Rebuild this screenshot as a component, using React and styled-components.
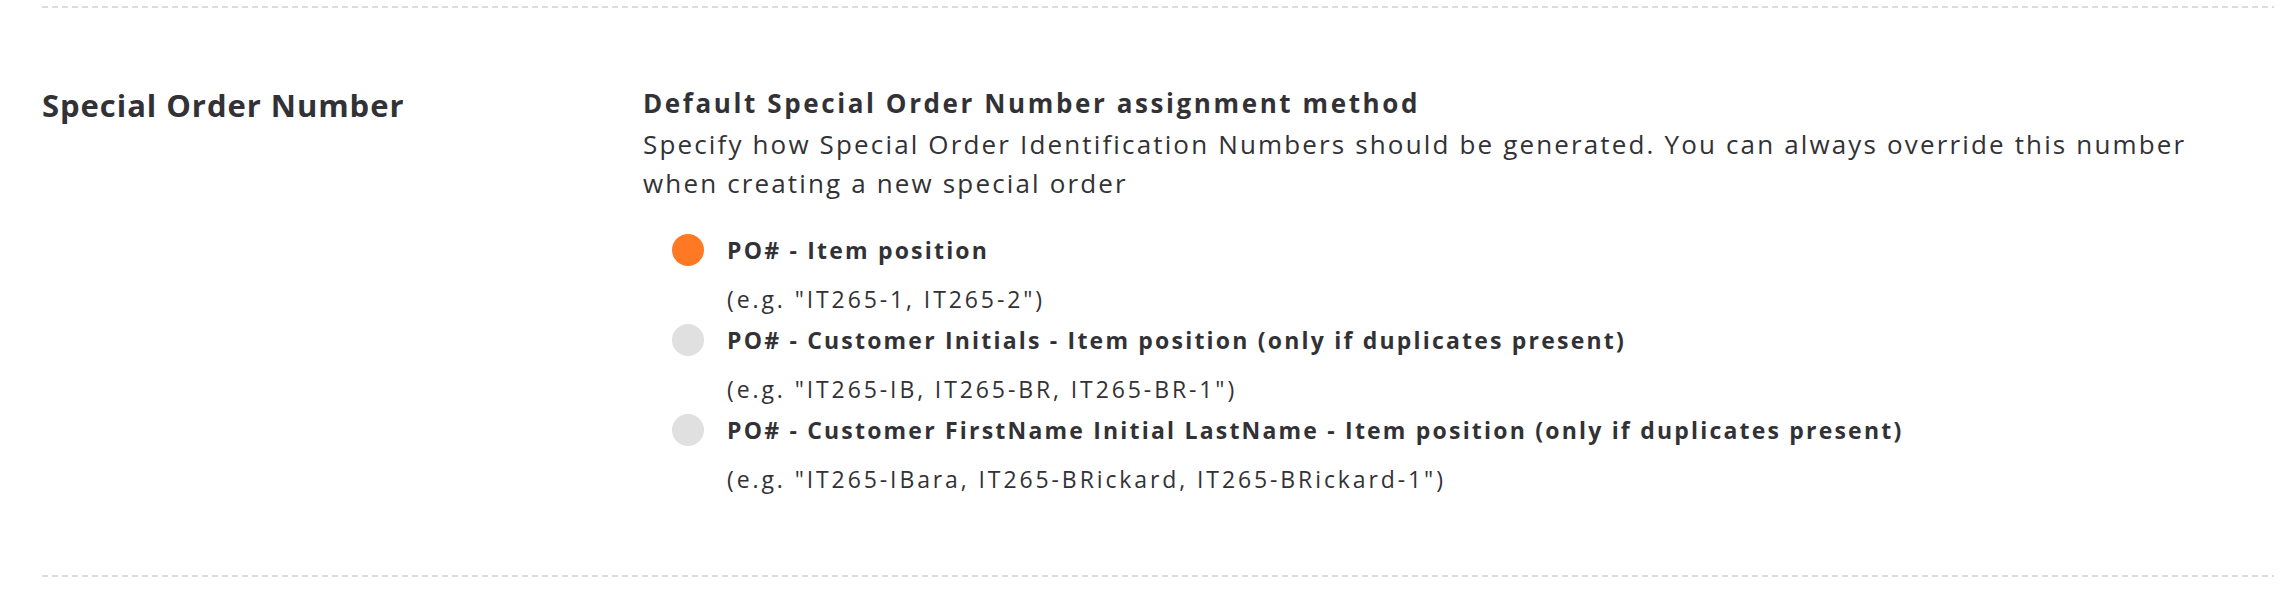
import styled, { createGlobalStyle } from "styled-components";

const OPTIONS = [
  {
    id: "item",
    label: "PO# - Item position",
    example: '(e.g. "IT265-1, IT265-2")',
  },
  {
    id: "initials",
    label: "PO# - Customer Initials - Item position (only if duplicates present)",
    example: '(e.g. "IT265-IB, IT265-BR, IT265-BR-1")',
  },
  {
    id: "name",
    label:
      "PO# - Customer FirstName Initial LastName - Item position (only if duplicates present)",
    example: '(e.g. "IT265-IBara, IT265-BRickard, IT265-BRickard-1")',
  },
];

function App() {
  const selected = "item";

  return (
    <>
      <GlobalStyle />
      <Page>
        <Divider />
        <Section>
          <SectionTitle>Special Order Number</SectionTitle>
          <Content>
            <Heading>Default Special Order Number assignment method</Heading>
            <Description>
              Specify how Special Order Identification Numbers should be
              generated. You can always override this number when creating a
              new special order
            </Description>
            <OptionList>
              {OPTIONS.map(({ id, label, example }) => (
                <Option key={id}>
                  <Radio $checked={id === selected} />
                  <OptionLabel>{label}</OptionLabel>
                  <OptionExample>{example}</OptionExample>
                </Option>
              ))}
            </OptionList>
          </Content>
        </Section>
        <Divider />
      </Page>
    </>
  );
}

export default App;

const GlobalStyle = createGlobalStyle`
  body {
    margin: 0;
    background: #ffffff;
    font-family: "Open Sans", "Lato", sans-serif;
    color: #323236;
  }
`;

const Page = styled.div`
  padding: 6px 4px 0 42px;
`;

const Divider = styled.div`
  height: 2px;
  background: repeating-linear-gradient(
    to right,
    #dcdcdc 0 6px,
    transparent 6px 10px
  );
`;

const Section = styled.div`
  display: grid;
  grid-template-columns: 601px 1fr;
  padding: 79px 0 76px;
`;

const SectionTitle = styled.h2`
  margin: 0;
  font-size: 31px;
  line-height: 36px;
  font-weight: 700;
  letter-spacing: 0.95px;
`;

const Content = styled.div`
  display: flex;
  flex-direction: column;
`;

const Heading = styled.h3`
  margin: 0;
  font-size: 26px;
  line-height: 32px;
  font-weight: 700;
  letter-spacing: 2.6px;
`;

const Description = styled.p`
  margin: 6px 0 0;
  max-width: 1580px;
  font-size: 26px;
  line-height: 39px;
  font-weight: 400;
  letter-spacing: 2.15px;
`;

const OptionList = styled.div`
  display: flex;
  flex-direction: column;
  gap: 1px;
  margin-top: 27px;
  padding-left: 29px;
`;

const Option = styled.div`
  display: grid;
  grid-template-columns: 32px 1fr;
  column-gap: 23px;
  row-gap: 9px;
  align-items: center;
`;

const Radio = styled.span`
  width: 32px;
  height: 32px;
  border-radius: 50%;
  background: ${(props) => (props.$checked ? "#ff7824" : "#e0e0e0")};
`;

const OptionLabel = styled.div`
  font-size: 23px;
  line-height: 40px;
  font-weight: 700;
  letter-spacing: 2.2px;
`;

const OptionExample = styled.div`
  grid-column: 2;
  font-size: 23px;
  line-height: 40px;
  font-weight: 400;
  letter-spacing: 2.9px;
`;
